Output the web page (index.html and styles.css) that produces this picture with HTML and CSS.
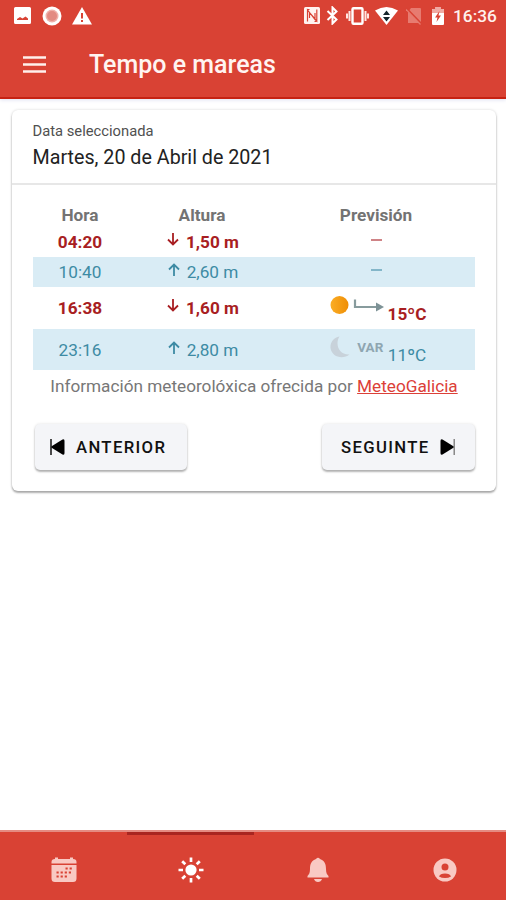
FILE: index.html
```html
<!DOCTYPE html>
<html lang="gl">
<head>
<meta charset="utf-8">
<title>Tempo e mareas</title>
<link rel="stylesheet" href="styles.css">
</head>
<body>
<header class="header">
  <div class="status">
    <div class="status-left">
      <svg width="17" height="17" viewBox="0 0 17 17"><path fill="#fff" fill-rule="evenodd" d="M1.500 0H15.500Q17 0 17 1.500V15.500Q17 17 15.500 17H1.500Q0 17 0 15.500V1.500Q0 0 1.500 0ZM3 13H14V11.500L11.500 9.500L8.500 11.500L6 10L3 12Z"/></svg>
      <svg width="20" height="20" viewBox="0 0 20 20"><circle cx="10" cy="10" r="9.500" fill="#fff"/><circle cx="10" cy="10" r="6.500" fill="#efb0aa"/><circle cx="10" cy="10" r="5" fill="#e38a82"/></svg>
      <svg class="warn" width="20" height="18" viewBox="0 0 20 18"><path fill="#fff" d="M10 0L20 17.500H0Z"/><path fill="#d94234" d="M9 6h2v5.500H9zM9 13h2v2H9z"/></svg>
    </div>
    <div class="status-right">
      <svg class="nfc" width="16" height="17" viewBox="0 0 16 17"><rect width="16" height="17" rx="1.500" fill="#fff3f0"/><path d="M3.500 14.500V3L11 12.500V6M5.500 2.500H3.500M12.800 2.500V14L5.500 5.500V11M10.500 14.500h2" fill="none" stroke="#d94234" stroke-width="1.200"/></svg>
      <svg class="bt" width="13" height="19" viewBox="0 0 13 19"><path d="M1.500 5L10.500 13.500L6.500 17.500V1.500L10.500 5.500L1.500 14" fill="none" stroke="#fff" stroke-width="2"/></svg>
      <svg class="vib" width="23" height="18" viewBox="0 0 23 18"><rect x="6.500" y="1.200" width="10" height="15.600" rx="1" fill="none" stroke="#fff" stroke-width="2.400"/><path d="M3.500 4v10M19.500 4v10M1 6.500v5M22 6.500v5" stroke="#ffe5e0" stroke-width="2"/></svg>
      <svg class="wifi" width="23" height="18" viewBox="0 0 23 18"><path d="M0 3.500Q11.500-3.500 23 3.500L11.500 18Z" fill="#fff"/><path d="M11.500 3.500L15 8H8ZM8 10h7l-3.500 4.500Z" fill="#17252b"/></svg>
      <svg class="sim" width="16" height="18" viewBox="0 0 16 18"><path d="M5 1H14Q15 1 15 2V16H2V5Z" fill="#e77b70"/><path d="M0 1L15.500 17" stroke="#d94234" stroke-width="2"/><path d="M0 2.500L14.500 17.500" stroke="#e77b70" stroke-width="1.200"/></svg>
      <svg class="bat" width="12" height="18" viewBox="0 0 12 18"><path d="M3.500 0h5v2H11Q12 2 12 3V17Q12 18 11 18H1Q0 18 0 17V3Q0 2 1 2H3.500Z" fill="#fff"/><path d="M0 3Q0 2 1 2H3.500V0h5v2H11Q12 2 12 3v3H0Z" fill="#f0aaa3"/><path d="M7.500 4L3 10.500h2.500L4.500 15L9 8.500H6.500Z" fill="#d94234"/></svg>
      <span class="time">16:36</span>
    </div>
  </div>
  <div class="toolbar">
    <svg width="23" height="17" viewBox="0 0 23 17"><path d="M0 1.500h23M0 8.500h23M0 15.500h23" stroke="#fff0ec" stroke-width="2.600"/></svg>
    <h1>Tempo e mareas</h1>
  </div>
</header>

<main>
  <section class="card">
    <div class="date">
      <div class="date-label">Data seleccionada</div>
      <div class="date-value">Martes, 20 de Abril de 2021</div>
    </div>
    <div class="content">
      <div class="row head"><b>Hora</b><b>Altura</b><b>Previsión</b></div>
      <div class="row low">
        <span>04:20</span>
        <span><svg class="arrow" width="12" height="13" viewBox="0 0 12 13"><path d="M6 0V11M1 6.500L6 11.500L11 6.500"/></svg>1,50 m</span>
        <span><i class="dash"></i></span>
      </div>
      <div class="row high">
        <span>10:40</span>
        <span><svg class="arrow" width="12" height="13" viewBox="0 0 12 13"><path d="M6 13V2M1 6.500L6 1.500L11 6.500"/></svg>2,60 m</span>
        <span><i class="dash"></i></span>
      </div>
      <div class="row low tall">
        <span>16:38</span>
        <span><svg class="arrow" width="12" height="13" viewBox="0 0 12 13"><path d="M6 0V11M1 6.500L6 11.500L11 6.500"/></svg>1,60 m</span>
        <span class="forecast">
          <svg width="54" height="20" viewBox="0 0 54 20"><defs><linearGradient id="sun"><stop stop-color="#faad25"/><stop offset="1" stop-color="#ef8e05"/></linearGradient></defs><circle cx="9.500" cy="10" r="9" fill="url(#sun)"/><path d="M25 4.500V12H47" fill="none" stroke="#879b9d" stroke-width="2.200"/><path d="M46 7.500L54 12L46 16.500Z" fill="#7d9296"/></svg>
          <span class="temp">15ºC</span>
        </span>
      </div>
      <div class="row high tall">
        <span>23:16</span>
        <span><svg class="arrow" width="12" height="13" viewBox="0 0 12 13"><path d="M6 13V2M1 6.500L6 1.500L11 6.500"/></svg>2,80 m</span>
        <span class="forecast">
          <svg width="20" height="22" viewBox="0 0 20 22"><path d="M9.500 0.500C5 7 8 19 19.500 18.500C13 23.500 2 21.500 0.500 12C0 6 4 1.500 9.500 0.500Z" fill="#c8d2da"/></svg>
          <span class="wind">VAR</span>
          <span class="temp">11ºC</span>
        </span>
      </div>
      <p class="source">Información meteorolóxica ofrecida por <a>MeteoGalicia</a></p>
      <div class="buttons">
        <button class="prev"><svg width="15" height="16" viewBox="0 0 15 16"><path d="M1 0v16" stroke="#000" stroke-width="1.400"/><path d="M12.500 0.500Q14.500-.5 14.500 2V14Q14.500 16.500 12.500 15.500L2 9Q.5 8 2 7Z"/></svg><span>ANTERIOR</span></button>
        <button class="next"><span>SEGUINTE</span><svg width="15" height="16" viewBox="0 0 15 16"><path d="M14.200 0v16" stroke="#777" stroke-width="1.300"/><path d="M2.500 0.500Q0.500-.5 0.500 2V14Q0.500 16.500 2.500 15.500L13 9Q14.500 8 13 7Z"/></svg></button>
      </div>
    </div>
  </section>
</main>

<nav class="tabs">
  <div class="tab"><svg width="26" height="26" viewBox="0 0 26 26"><path fill="#f9c9c3" d="M4 2V0.500H7V2H19V0.500h3V2Q25.500 2 25.500 5V6.500H.5V5Q.5 2 4 2ZM.5 8h25V21.500Q25.500 25 22 25H4Q.5 25 .5 21.500Z"/><path d="M14.500 11.500h6.500M5.500 15.500h15.500M5.500 19.500h12" stroke="#d94234" stroke-width="2.200" stroke-dasharray="2.200 1.900"/></svg></div>
  <div class="tab active"><svg width="26" height="26" viewBox="0 0 26 26"><circle cx="13" cy="13" r="5.600" fill="#fff"/><path d="M13 .5v4.500M13 21v4.500M.5 13H5M21 13h4.500M4.200 4.200l3.100 3.100M18.700 18.700l3.100 3.100M4.200 21.800l3.100-3.100M18.700 7.300l3.100-3.100" stroke="#fff" stroke-width="2.700"/></svg></div>
  <div class="tab"><svg width="22" height="26" viewBox="0 0 22 26"><path fill="#f9c9c3" d="M9 2Q11-.5 13 2C17.500 3.500 19 7 19 12C19 16 20 17.500 21.500 19V20.500H.5V19C2 17.500 3 16 3 12C3 7 4.500 3.500 9 2ZM7 22h8Q14 25 11 25T7 22Z"/></svg></div>
  <div class="tab"><svg width="24" height="24" viewBox="0 0 24 24"><circle cx="12" cy="12" r="11.500" fill="#f9c9c3"/><circle cx="12" cy="9" r="3.500" fill="#d94234"/><path d="M6 18.500Q7 15.500 12 15.500T18 18.500Q15.500 20 12 20T6 18.500Z" fill="#d94234"/></svg></div>
</nav>
</body>
</html>
```
FILE: styles.css
```css
* { box-sizing: border-box; }
body {
  margin: 0;
  height: 900px;
  display: flex;
  flex-direction: column;
  overflow: hidden;
  background: #fff;
  font-family: Roboto, sans-serif;
  color: #222;
}
svg { display: block; flex: none; }
.header {
  height: 99px;
  background: #d94234;
  border-bottom: 2px solid #c62213;
  box-shadow: 0 1px 4px #dfe1f2;
}
.status {
  height: 31px;
  display: flex;
  justify-content: space-between;
  padding: 0 10px 0 14px;
}
.status-left, .status-right { display: flex; align-items: center; }
.status-left { gap: 11px; }
.warn { margin-left: -1px; }
.bt { margin-left: 6px; }
.vib { margin-left: 7px; }
.wifi { margin-left: 6px; }
.sim { margin-left: 8px; }
.bat { margin-left: 10px; }
.time {
  width: 43px;
  margin-left: 9px;
  font-size: 17.300px;
  font-weight: 500;
  color: #fff1ed;
  white-space: nowrap;
}
.toolbar {
  height: 67px;
  display: flex;
  align-items: center;
  gap: 43px;
  padding-left: 23px;
}
h1 {
  margin: 0;
  font-size: 25px;
  font-weight: 500;
  color: #fff4f1;
  line-height: 30px;
  white-space: nowrap;
}
main { flex: 1; padding: 11px 10px 0 12px; }
.card {
  height: 381px;
  background: #fff;
  border-radius: 6px;
  box-shadow: 0 2px 2px rgba(0,0,0,.3), 0 0 3px rgba(0,0,0,.16);
}
.date {
  height: 75px;
  padding: 11px 20.500px 0;
  border-bottom: 2px solid #e7e7e7;
}
.date-label {
  font-size: 14.750px;
  line-height: 20px;
  color: #505050;
  white-space: nowrap;
}
.date-value {
  margin-top: 4px;
  font-size: 19.700px;
  line-height: 26px;
  white-space: nowrap;
}
.content { padding: 16px 21px 0; font-size: 17.200px; }
.row {
  display: grid;
  grid-template-columns: 94px 150px 198px;
  height: 30px;
  align-items: center;
  text-align: center;
}
.row > span { display: flex; justify-content: center; align-items: center; }
.row.head { height: 27px; color: #737373; }
.low { height: 29px; color: #a81e22; font-weight: 700; }
.low > span { padding-bottom: 1px; }
.low.tall > span { padding-bottom: 0; }
.high { background: #d9ecf5; color: #3d8ba4; }
.row > span:nth-child(2) { padding-left: 2px; }
.row.tall { height: 42px; }
.row.high.tall { height: 41px; }
.arrow { margin: -5px 7px 0 0; fill: none; stroke: currentColor; stroke-width: 1.800; }
.dash { width: 11px; height: 2px; margin-top: -5px; background: currentColor; opacity: .55; }
.row > .forecast { padding-left: 4px; }
.forecast svg { margin-top: -6px; }
.temp { margin: 11px 0 0 4px; }
.wind { width: 27px; margin: -5px 0 0 7px; font-size: 13.500px; font-weight: 700; color: #8fa6b1; }
.source {
  margin: 4px 0 0;
  text-align: center;
  line-height: 24px;
  color: #777;
  white-space: nowrap;
}
a { color: #dc4038; text-decoration: underline; }
.buttons { display: flex; justify-content: space-between; margin: 26px 0 0 2px; }
button {
  width: 152px;
  height: 46px;
  display: flex;
  align-items: center;
  padding: 0 15px;
  border: 0;
  border-radius: 5px;
  background: #f4f5f8;
  box-shadow: 0 2px 2px rgba(0,0,0,.28), 0 0 3px rgba(0,0,0,.12);
  color: #111;
  font: 500 16.700px Roboto, sans-serif;
  letter-spacing: 1.350px;
  white-space: nowrap;
}
.prev { gap: 11px; }
.next { padding-left: 19px; gap: 10px; width: 153px; }
.tabs {
  height: 70px;
  display: grid;
  grid-template-columns: repeat(4, 127px);
  background: #d94234;
  border-top: 2px solid #e58b82;
}
.tab { display: flex; align-items: center; justify-content: center; padding-top: 4px; border-top: 3px solid transparent; }
.tab.active { border-color: #a92520; }
```
